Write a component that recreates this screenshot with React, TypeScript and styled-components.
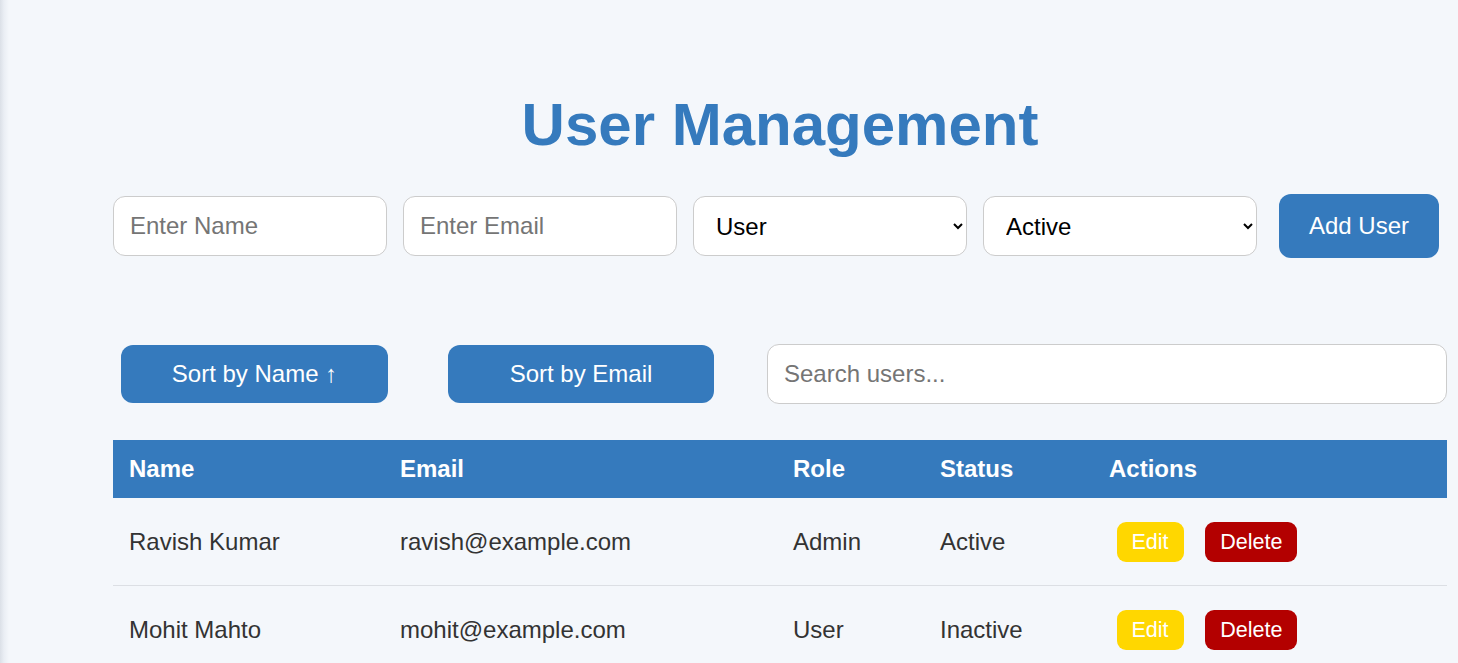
import React, { useState } from "react";
import styled, { createGlobalStyle } from "styled-components";

const Global = createGlobalStyle`
  html {
    background: linear-gradient(to right, #dbe0e7 0px, #eaeef4 4px, #f4f7fb 9px);
    background-color: #f4f7fb;
    min-height: 100%;
  }
  body {
    margin: 0;
    font-family: "Liberation Sans", Arial, sans-serif;
    color: #333;
    overflow: hidden;
  }
  * { box-sizing: border-box; }
`;

const Page = styled.div`
  width: 1334px;
  margin-left: 113px;
  padding-top: 90px;
`;

const Title = styled.h1`
  margin: 0 0 35px;
  text-align: center;
  color: #357abd;
  font-size: 60px;
  font-weight: 700;
  line-height: 69px;
`;

const FormRow = styled.div`
  display: flex;
  align-items: center;
  gap: 16px;
`;

const Field = styled.input<{ $w?: number }>`
  width: ${(p) => p.$w ?? 274}px;
  height: 60px;
  padding: 15px 16px;
  border: 1px solid #cccccc;
  border-radius: 12px;
  background: #fff;
  font-family: "Liberation Sans", Arial, sans-serif;
  font-size: 24px;
  color: #333;
  outline: none;
  &::placeholder { color: #757575; }
`;

const Select = styled.select`
  width: 274px;
  height: 60px;
  padding: 0 10px 0 18px;
  border: 1px solid #cccccc;
  border-radius: 12px;
  background: #fff;
  font-family: "Liberation Sans", Arial, sans-serif;
  font-size: 24px;
  color: #000;
  outline: none;
`;

const BlueButton = styled.button<{ $w?: number; $h: number }>`
  width: ${(p) => (p.$w ? `${p.$w}px` : "auto")};
  height: ${(p) => p.$h}px;
  padding: 0;
  border: none;
  border-radius: 12px;
  background: #357abd;
  color: #fff;
  font-family: "Liberation Sans", Arial, sans-serif;
  font-size: 24px;
  white-space: nowrap;
  cursor: pointer;
`;

const AddButton = styled(BlueButton)`
  margin-left: 6px;
`;

const SortRow = styled.div`
  display: flex;
  align-items: center;
  margin-top: 86px;
  padding-left: 8px;
`;

const SortButton = styled(BlueButton)<{ $mr: number }>`
  margin-right: ${(p) => p.$mr}px;
`;

const Table = styled.table`
  width: 1334px;
  margin-top: 36px;
  border-collapse: collapse;
  table-layout: fixed;
  font-size: 24px;
`;

const Th = styled.th<{ $w: number }>`
  width: ${(p) => p.$w}px;
  padding: 15px 16px;
  background: #357abd;
  color: #fff;
  text-align: left;
  font-weight: 700;
  line-height: 28px;
`;

const Td = styled.td`
  padding: 24px 16px 23px;
  border-bottom: 1px solid #dcdfe4;
  color: #333;
  line-height: 28px;
  white-space: nowrap;
`;

const ActionButton = styled.button<{ $bg: string }>`
  margin: 0 7.5px;
  padding: 6px 15px;
  border: none;
  border-radius: 9px;
  background: ${(p) => p.$bg};
  color: #fff;
  font-family: "Liberation Sans", Arial, sans-serif;
  font-size: 21.5px;
  line-height: 28px;
  vertical-align: middle;
  cursor: pointer;
`;

type User = { name: string; email: string; role: string; status: string };

const users: User[] = [
  { name: "Ravish Kumar", email: "ravish@example.com", role: "Admin", status: "Active" },
  { name: "Mohit Mahto", email: "mohit@example.com", role: "User", status: "Inactive" },
];

const columns = [
  { label: "Name", w: 271 },
  { label: "Email", w: 393 },
  { label: "Role", w: 147 },
  { label: "Status", w: 169 },
  { label: "Actions", w: 354 },
];

export default function App() {
  const [role, setRole] = useState("User");
  const [status, setStatus] = useState("Active");
  return (
    <>
      <Global />
      <Page>
        <Title>User Management</Title>
        <FormRow>
          <Field placeholder="Enter Name" />
          <Field placeholder="Enter Email" />
          <Select value={role} onChange={(e) => setRole(e.target.value)}>
            <option>User</option>
            <option>Admin</option>
          </Select>
          <Select value={status} onChange={(e) => setStatus(e.target.value)}>
            <option>Active</option>
            <option>Inactive</option>
          </Select>
          <AddButton $h={64} $w={160}>Add User</AddButton>
        </FormRow>
        <SortRow>
          <SortButton $w={267} $h={58} $mr={60}>Sort by Name ↑</SortButton>
          <SortButton $w={266} $h={58} $mr={53}>Sort by Email</SortButton>
          <Field $w={680} placeholder="Search users..." />
        </SortRow>
        <Table>
          <thead>
            <tr>
              {columns.map((c) => (
                <Th key={c.label} $w={c.w}>{c.label}</Th>
              ))}
            </tr>
          </thead>
          <tbody>
            {users.map((u) => (
              <tr key={u.email}>
                <Td>{u.name}</Td>
                <Td>{u.email}</Td>
                <Td>{u.role}</Td>
                <Td>{u.status}</Td>
                <Td>
                  <ActionButton $bg="#ffd700">Edit</ActionButton>{" "}
                  <ActionButton $bg="#b30000">Delete</ActionButton>
                </Td>
              </tr>
            ))}
          </tbody>
        </Table>
      </Page>
    </>
  );
}
